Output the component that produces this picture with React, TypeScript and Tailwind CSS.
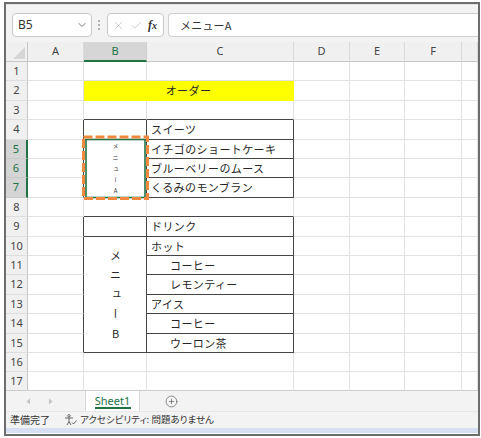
import React from "react";
import { ChevronDown, X, Check, CirclePlus } from "lucide-react";

const JP = "font-['Noto_Sans_CJK_JP',sans-serif]";
const UI = "font-['Noto_Sans','Noto_Sans_CJK_JP',sans-serif]";

function Cell({
  r,
  b,
  className,
  children,
}: {
  r?: boolean;
  b?: boolean;
  className?: string;
  children?: React.ReactNode;
}) {
  return (
    <div
      className={`border-r border-b ${r ? "border-r-[#454545]" : "border-r-[#e2e2e2]"} ${
        b ? "border-b-[#454545]" : "border-b-[#e2e2e2]"
      } ${className ?? ""}`}
    >
      {children}
    </div>
  );
}

function RowHead({ n, sel }: { n: number; sel: boolean }) {
  return (
    <div
      className={
        sel
          ? `${UI} flex items-center justify-center bg-[#d4d4d4] text-[#217346] text-[11px] border-b border-b-[#c9c9c9] border-r-2 border-r-[#217346]`
          : `${UI} flex items-center justify-center bg-[#f0f0f0] text-[#444] text-[11px] border-b border-b-[#dedede] border-r border-r-[#c6c6c6]`
      }
    >
      {n}
    </div>
  );
}

function ColHead({ label, sel }: { label: string; sel?: boolean }) {
  return (
    <div
      className={
        sel
          ? `${UI} flex items-center justify-center bg-[#d6d6d6] text-[#217346] text-[11px] border-r border-r-[#d0d0d0] border-b-2 border-b-[#217346]`
          : `${UI} flex items-center justify-center bg-[#f0f0f0] text-[#444] text-[11px] border-r border-r-[#d9d9d9] border-b border-b-[#c6c6c6]`
      }
    >
      {label}
    </div>
  );
}

const C_TEXT: Record<number, [string, boolean]> = {
  4: ["スイーツ", false],
  5: ["イチゴのショートケーキ", false],
  6: ["ブルーベリーのムース", false],
  7: ["くるみのモンブラン", false],
  9: ["ドリンク", false],
  10: ["ホット", false],
  11: ["コーヒー", true],
  12: ["レモンティー", true],
  13: ["アイス", false],
  14: ["コーヒー", true],
  15: ["ウーロン茶", true],
};

const TXT = `${JP} text-[11px] tracking-[0.4px] leading-none text-[#262626] whitespace-nowrap`;

export default function App() {
  const cells: React.ReactNode[] = [];

  cells.push(
    <div key="corner" className="bg-[#f0f0f0] border-r border-r-[#c6c6c6] border-b border-b-[#c6c6c6] relative">
      <svg className="absolute left-[6px] top-[4px]" width="14" height="14" viewBox="0 0 14 14">
        <polygon points="1,13 13,1 13,13" fill="#d6d6d6" />
      </svg>
    </div>
  );
  ["A", "B", "C", "D", "E", "F", ""].forEach((l) =>
    cells.push(<ColHead key={"h" + l} label={l} sel={l === "B"} />)
  );

  for (let r = 1; r <= 17; r++) {
    const inTable = (r >= 4 && r <= 7) || (r >= 9 && r <= 15);
    cells.push(<RowHead key={"rh" + r} n={r} sel={r >= 5 && r <= 7} />);
    cells.push(<Cell key={"a" + r} r={inTable} />);
    if (r === 2) {
      cells.push(
        <div
          key="b2"
          className={`col-span-2 bg-[#ffff00] border-r border-b border-r-[#ffff00] border-b-[#ffff00] flex items-center justify-center ${TXT}`}
        >
          オーダー
        </div>
      );
    } else if (r === 5) {
      cells.push(
        <Cell key="b5" r b className="row-span-3 relative flex items-center justify-center overflow-visible">
          <span
            className={`${JP} [writing-mode:vertical-rl] [text-orientation:upright] whitespace-nowrap text-[6px] tracking-[5.3px] pt-[5px] leading-none text-[#333]`}
          >
            メニューA
          </span>
          <svg
            className="absolute left-[-4px] top-[-6px] z-10"
            width="71"
            height="68"
            viewBox="0 0 71 68"
          >
            <rect x="6" y="5.5" width="59" height="58" fill="none" stroke="#217346" strokeWidth="1.6" />
            <rect
              x="3.5"
              y="3"
              width="64"
              height="61.5"
              fill="none"
              stroke="#f0883e"
              strokeWidth="3"
              strokeDasharray="9 3"
            />
          </svg>
        </Cell>
      );
    } else if (r === 10) {
      cells.push(
        <Cell key="b10" r b className="row-span-6 flex items-center justify-center">
          <span
            className={`${JP} [writing-mode:vertical-rl] [text-orientation:upright] whitespace-nowrap text-[11px] tracking-[8.5px] pt-[8.5px] leading-none text-[#262626]`}
          >
            メニューB
          </span>
        </Cell>
      );
    } else if ((r >= 6 && r <= 7) || (r >= 11 && r <= 15)) {
      // covered by merged cell
    } else {
      cells.push(
        <Cell key={"b" + r} r={r === 4 || r === 9} b={r === 3 || r === 4 || r === 8 || r === 9} />
      );
    }
    if (r !== 2) {
      const t = C_TEXT[r];
      cells.push(
        <Cell
          key={"c" + r}
          r={inTable}
          b={r >= 3 && r <= 15}
          className={`flex items-center ${t && t[1] ? "pl-[23px]" : "pl-[4px]"}`}
        >
          {t ? <span className={TXT}>{t[0]}</span> : null}
        </Cell>
      );
    }
    ["d", "e", "f", "g"].forEach((c) => cells.push(<Cell key={c + r} />));
  }

  return (
    <div className="w-[481px] h-[438px] bg-white overflow-hidden">
      <div className="ml-[4px] mt-[2px] w-[476px] h-[434px] border-2 border-[#6d6d6d] flex flex-col overflow-hidden">
        {/* formula bar */}
        <div className="h-[38px] shrink-0 bg-[#f3f3f3] border-t border-t-[#e4e4e4] flex items-start pt-[8px]">
          <div className="ml-[6px] w-[80px] h-[24px] bg-white border border-[#c8c8c8] rounded-[4px] flex items-center justify-between pl-[5px] pr-[3px]">
            <span className={`${UI} text-[12px] text-[#333]`}>B5</span>
            <ChevronDown size={12} strokeWidth={1.6} color="#555" />
          </div>
          <div className="ml-[6px] mt-[7px] flex flex-col gap-[2px]">
            <div className="w-[2px] h-[2px] bg-[#9a9a9a] rounded-full" />
            <div className="w-[2px] h-[2px] bg-[#9a9a9a] rounded-full" />
            <div className="w-[2px] h-[2px] bg-[#9a9a9a] rounded-full" />
          </div>
          <div className="ml-[7px] w-[57px] h-[24px] bg-white border border-[#c8c8c8] rounded-[4px] flex items-center pl-[4px] gap-[5px]">
            <X size={13} strokeWidth={1.1} color="#b3b3b3" />
            <Check size={13} strokeWidth={1.1} color="#b3b3b3" />
            <span className="font-['Liberation_Serif',serif] italic font-bold text-[12px] text-[#333] leading-none">
              f<span className="text-[10px]">x</span>
            </span>
          </div>
          <div className="ml-[4px] flex-1 h-[24px] bg-white border border-r-0 border-[#cfcfcf] rounded-l-[4px] flex items-center pl-[11px]">
            <span className={`${JP} text-[11px] tracking-[0.2px] text-[#333]`}>メニューA</span>
          </div>
        </div>

        {/* grid */}
        <div className="h-[348px] shrink-0 overflow-hidden bg-white grid grid-cols-[22px_56px_63px_147px_56px_55px_57px_1fr] grid-rows-[20px_19px_20px_19px_20px_19px_19px_20px_19px_20px_19px_19px_20px_19px_20px_19px_19px_20px]">
          {cells}
        </div>

        {/* tab bar */}
        <div className="h-[21px] shrink-0 bg-[#f3f3f3] border-t border-t-[#cdcdcd] flex items-stretch">
          <div className="w-[79px] flex items-center">
            <svg className="ml-[20px]" width="5" height="7" viewBox="0 0 5 7">
              <polygon points="4,0.5 4,6.5 0.5,3.5" fill="#c4c4c4" />
            </svg>
            <svg className="ml-[17px]" width="5" height="7" viewBox="0 0 5 7">
              <polygon points="1,0.5 1,6.5 4.5,3.5" fill="#c4c4c4" />
            </svg>
          </div>
          <div className="w-[55px] bg-white border-x border-x-[#d8d8d8] flex flex-col items-center pt-[3px]">
            <span className={`${UI} text-[11px] leading-[13px] text-[#217346]`}>Sheet1</span>
            <div className="w-[36px] h-[2px] bg-[#217346]" />
          </div>
          <div className="ml-[25px] flex items-center">
            <CirclePlus size={13} strokeWidth={1.2} color="#555" />
          </div>
        </div>

        {/* status bar */}
        <div className="h-[17px] shrink-0 bg-[#f3f3f3] border-t border-t-[#e8e8e8] flex items-center">
          <span className={`${JP} ml-[4px] text-[10px] text-[#333] leading-none`}>準備完了</span>
          <svg className="ml-[14px]" width="13" height="12" viewBox="0 0 13 12">
            <circle cx="5" cy="1.8" r="1.2" fill="none" stroke="#555" strokeWidth="0.9" />
            <path d="M1 4 L9 4 M5 4 L5 7.5 L3 11 M5 7.5 L7 11" fill="none" stroke="#555" strokeWidth="0.9" />
            <path d="M8 8.5 L9.5 10 L12.5 6.5" fill="none" stroke="#555" strokeWidth="0.9" />
          </svg>
          <span className={`${JP} ml-[3px] text-[9.5px] text-[#333] leading-none [font-feature-settings:'palt']`}>
            アクセシビリティ: 問題ありません
          </span>
        </div>
        <div className="h-[5px] shrink-0 bg-[#d7e0f3]" />
      </div>
    </div>
  );
}
